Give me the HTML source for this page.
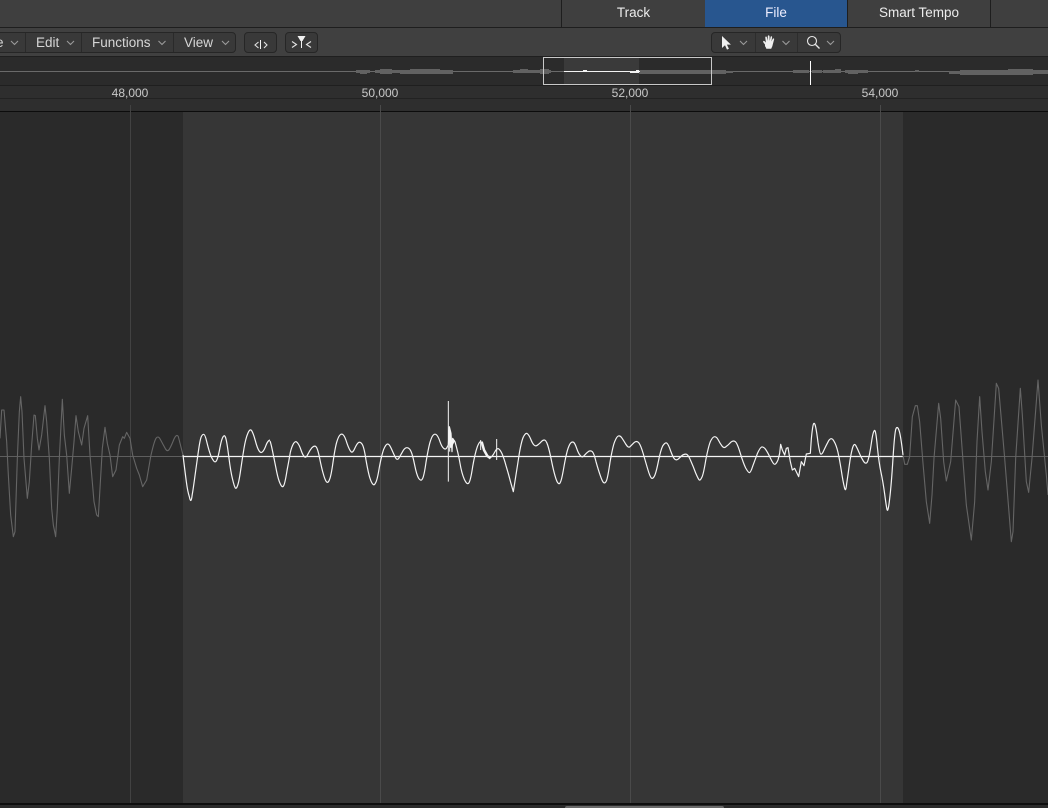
<!DOCTYPE html>
<html><head><meta charset="utf-8">
<style>
html,body{margin:0;padding:0;background:#2a2a2a}
#p{position:relative;width:1048px;height:808px;overflow:hidden;font-family:"Liberation Sans",sans-serif;background:#2a2a2a}
.a{position:absolute}
.t{position:absolute;top:0;height:27px;line-height:25px;text-align:center;color:#ececec;font-size:13.5px;box-sizing:border-box}
.m{position:absolute;top:36px;font-size:13.5px;color:#d6d6d6;line-height:14px;white-space:nowrap}
.r{position:absolute;top:86px;font-size:12px;color:#c8c8c8;line-height:14px;width:60px;text-align:center}
.b{position:absolute;top:32px;height:21px;box-sizing:border-box;border:1px solid #262626;border-radius:4px;background:#393939}
svg{position:absolute;left:0;top:0}
</style></head><body><div id="p">
<div class="a" style="left:0;top:0;width:1048px;height:27px;background:#3f3f3f"></div>
<div class="a" style="left:0;top:27px;width:1048px;height:1px;background:#1e1e1e"></div>
<div class="a" style="left:0;top:28px;width:1048px;height:28px;background:#404040"></div>
<div class="a" style="left:0;top:56px;width:1048px;height:1px;background:#1f1f1f"></div>
<div class="a" style="left:0;top:57px;width:1048px;height:28px;background:#2b2b2b"></div>
<div class="a" style="left:0;top:85px;width:1048px;height:1px;background:#1f1f1f"></div>
<div class="a" style="left:0;top:86px;width:1048px;height:12px;background:#2e2e2e"></div>
<div class="a" style="left:0;top:98px;width:1048px;height:1px;background:#222"></div>
<div class="a" style="left:0;top:99px;width:1048px;height:12px;background:#2e2e2e"></div>
<div class="a" style="left:0;top:111px;width:1048px;height:1px;background:#0c0c0c"></div>

<div class="t" style="left:561px;width:144px;border-left:1px solid #1e1e1e">Track</div>
<div class="t" style="left:705px;width:142px;background:#28568f;color:#eef">File</div>
<div class="t" style="left:847px;width:144px;border-left:1px solid #1e1e1e;border-right:1px solid #1e1e1e">Smart Tempo</div>

<div class="b" style="left:-10px;width:246px"></div>
<div class="a" style="left:25px;top:33px;width:1px;height:19px;background:#2a2a2a"></div>
<div class="a" style="left:81px;top:33px;width:1px;height:19px;background:#2a2a2a"></div>
<div class="a" style="left:173px;top:33px;width:1px;height:19px;background:#2a2a2a"></div>
<div class="m" style="left:-4px">e</div>
<div class="m" style="left:36px">Edit</div>
<div class="m" style="left:92px">Functions</div>
<div class="m" style="left:184px">View</div>
<div class="b" style="left:244px;width:33px"></div>
<div class="b" style="left:285px;width:33px"></div>
<div class="b" style="left:711px;width:130px"></div>
<div class="a" style="left:755px;top:33px;width:1px;height:19px;background:#2d2d2d"></div>
<div class="a" style="left:797px;top:33px;width:1px;height:19px;background:#2d2d2d"></div>

<div class="r" style="left:100px">48,000</div>
<div class="r" style="left:350px">50,000</div>
<div class="r" style="left:600px">52,000</div>
<div class="r" style="left:850px">54,000</div>

<div class="a" style="left:0;top:112px;width:1048px;height:691px;background:#2a2a2a"></div>
<div class="a" style="left:183px;top:112px;width:720px;height:691px;background:#363636"></div>
<div class="a" style="left:564px;top:58px;width:75px;height:26px;background:#3a3a3a"></div>
<div class="a" style="left:0;top:803px;width:1048px;height:2px;background:#0e0e0e"></div>
<div class="a" style="left:0;top:805px;width:1048px;height:3px;background:#2b2b2b"></div>
<div class="a" style="left:565px;top:806px;width:159px;height:2px;background:#6a6a6a;border-radius:2px 2px 0 0"></div>

<svg width="1048" height="808" viewBox="0 0 1048 808" fill="none">
<!-- chevrons -->
<g stroke="#9a9a9a" stroke-width="1.1">
<path d="M11 41l3.500 3.500 3.500-3.500M67 41l3.500 3.500 3.500-3.500M158.500 41l3.500 3.500 3.500-3.500M222 41l3.500 3.500 3.500-3.500M740 41l3.500 3.500 3.500-3.500M782.500 41l3.500 3.500 3.500-3.500M827 41l3.500 3.500 3.500-3.500"/>
</g>
<!-- split / join icons -->
<g stroke="#e2e2e2" stroke-width="1.1">
<path d="M258.500 42l-3.500 3 3.500 3M264 42l3 3-3 3"/>
<path d="M292 41.500l4.500 3-4.500 3M311 41.500l-4.500 3 4.500 3"/>
</g>
<path d="M260.500 40v9M301.500 39v9" stroke="#f2f2f2" stroke-width="1"/>
<path d="M297.500 36h8l-3 5h-2z" fill="#f2f2f2"/>
<!-- pointer -->
<path d="M722 36v12l3-2.700 2 4.300 1.900-.9-2-4.100h4z" fill="#f0f0f0"/>
<!-- hand -->
<path d="M765 44.500c-1-1.300-2.500-3-1.600-3.500 .8-.4 2 1 2.500 1.600l-.6-5c-.1-1.300 1.300-1.400 1.600-.2l.8 3.500.1-4.500c0-1.300 1.600-1.300 1.700 0l.2 4.500.9-3.900c.3-1.200 1.700-.9 1.500.3l-.7 4.200 1.300-2.600c.5-1 1.800-.5 1.400.6l-1.400 5.200c-.4 2.300-1.400 3.300-1.400 4h-5c-.4-1.400-1.300-2.400-1.300-2.400z" fill="#f0f0f0"/>
<!-- magnifier -->
<circle cx="812" cy="41" r="4.500" stroke="#e8e8e8" stroke-width="1.100"/>
<path d="M815.500 44.500l4 4" stroke="#e8e8e8" stroke-width="1.300"/>

<!-- overview -->
<path d="M0 71.500H1048" stroke="#6a6a6a" stroke-width="1"/>
<g fill="#626262">
<rect x="356" y="70" width="14" height="3"/><rect x="360" y="70" width="7" height="4"/><rect x="375" y="70" width="27" height="3"/><rect x="380" y="69" width="12" height="5"/><rect x="400" y="70" width="53" height="4"/><rect x="410" y="69" width="30" height="2"/>
<rect x="513" y="70" width="38" height="3"/><rect x="520" y="69" width="8" height="4"/><rect x="540" y="69" width="9" height="5"/>
<rect x="639" y="70" width="87" height="4"/><rect x="726" y="71" width="7" height="2"/>
<rect x="793" y="70" width="16" height="3"/><rect x="812" y="70" width="10" height="3"/><rect x="823" y="70" width="18" height="3"/><rect x="835" y="69" width="6" height="4"/><rect x="845" y="70" width="20" height="3"/><rect x="848" y="70" width="10" height="4"/><rect x="860" y="70" width="8" height="3"/>
<rect x="915" y="70" width="4" height="2"/><rect x="949" y="71" width="99" height="3"/><rect x="960" y="70" width="48" height="5"/><rect x="1008" y="69" width="25" height="6"/><rect x="1033" y="70" width="15" height="4"/>
</g>
<path d="M564 71.500H640" stroke="#f4f4f4" stroke-width="1"/>
<rect x="583" y="70" width="4" height="2" fill="#f4f4f4"/><rect x="630" y="71" width="9" height="2" fill="#f4f4f4"/><rect x="636" y="70" width="3" height="3" fill="#f4f4f4"/>
<rect x="543.500" y="57.500" width="168" height="27" stroke="#c8c8c8" stroke-width="1"/>
<path d="M810.500 61v24" stroke="#fff" stroke-width="1"/>

<!-- ruler ticks & grid -->
<path d="M130.500 105V803" stroke="#424242" stroke-width="1"/>
<path d="M380.500 105V803M630.500 105V803M880.500 105V803" stroke="#4a4a4a" stroke-width="1"/>

<!-- baseline -->
<path d="M0 456.500H183M903 456.500H1048" stroke="#5e5e5e" stroke-width="1"/>
<path d="M183 456.500H903" stroke="#f6f6f6" stroke-width="1.200"/>

<!-- left -->
<g transform="translate(0,375) scale(.33333)" stroke-linejoin="round">
<path vector-effect="non-scaling-stroke" stroke="#656565" stroke-width="1.100" d="M0 190L5 105 12 105 20 200 25 300 32 420 40 485 45 470 52 250 58 110 62 65 66 110 72 250 82 370 88 320 95 210 102 120 106 122 112 190 117 225 125 180 135 92 140 140 148 250 155 400 160 450 167 485 172 400 178 250 187 73 193 180 200 240 208 355 215 280 222 200 228 122 235 170 245 210 252 160 263 122 270 240 282 380 290 420 295 425 300 340 307 220 315 157 322 205 330 240 338 305 348 285 358 210 368 185 373 190 380 172 390 190 398 240 410 280 418 300 428 335 440 315 452 245 Q462 200 468 190 Q475 180 482 195 Q490 210 496 221 Q503 233 509 221 Q515 210 522 192 Q530 175 535 185 L549 240"/>
<path vector-effect="non-scaling-stroke" stroke="#f4f4f4" stroke-width="1.200" d="M549 240Q555 290 559 320Q563 350 568 365Q573 390 576.500 360Q580 340 585 302Q590 265 595 230Q600 195 603.500 186Q607 178 611 178Q615 178 620 199Q625 220 630 235Q635 250 640.500 257Q646 265 650.500 255Q655 245 660 217Q665 190 670 184Q675 178 678.500 194Q682 210 687 250Q692 290 697.500 312Q703 335 706 339Q709 343 713 331Q717 320 722 285Q727 250 732 220Q737 190 743.500 175Q750 160 755 167Q760 175 766 197Q772 220 777.500 228Q783 236 788 230Q793 225 798 211Q803 197 810 195"/>
</g>
<!-- white middle 1 -->
<g transform="translate(260,390) scale(.33333)" stroke="#f4f4f4" stroke-linejoin="round">
<path vector-effect="non-scaling-stroke" stroke-width="1.200" d="M30 153Q33 160 39 190Q45 220 50 245Q55 270 61 282Q67 295 71 287Q75 280 81 242Q88 205 91 187Q95 170 101 160Q107 151 112 158Q118 165 123 180Q128 195 133 200Q138 205 144 192Q150 180 156 173Q163 166 168 170Q173 175 179 205Q185 235 190 252Q195 270 199 275Q204 281 208 270Q213 260 219 217Q225 175 230 157Q235 140 240 135Q245 130 250 135Q255 140 261 160Q268 180 273 185Q278 190 284 176Q290 162 295 158Q300 154 306 162Q312 170 318 210Q325 250 330 265Q335 280 339 283Q343 287 347 278Q352 270 358 232Q365 195 371 178Q378 162 383 162Q388 162 394 176Q400 190 406 202Q412 214 418 202Q425 190 430 181Q435 173 441 173Q448 173 453 184Q458 195 464 225Q470 255 476 265Q483 275 487 267Q492 260 498 217Q505 175 510 157Q515 140 520 135Q525 130 530 135Q535 140 540 155Q545 170 551 175Q558 180 561 172L565 165 568 110 573 130 576 185 578 145 585 155Q595 190 600 220Q605 250 613 268Q622 287 627 278Q632 270 638 230Q645 190 652 170Q660 150 664 157Q668 165 671 177Q675 190 682 197Q690 205 695 200Q700 195 705 185Q710 175 715 176Q720 178 726 191Q732 205 738 227Q745 250 752 277L760 305 766 267Q772 230 778 190Q785 150 791 139"/>
<path vector-effect="non-scaling-stroke" stroke-width="1" d="M565 33V275M710 147V210M569 115V185M662 150V180"/>
<path vector-effect="non-scaling-stroke" stroke-width="2.500" d="M665 155L672 180 682 198 692 205M568 125L572 170 582 150"/>
</g>
<!-- white middle 2 -->
<g transform="translate(520,400) scale(.33333)" stroke="#f4f4f4" stroke-linejoin="round">
<path vector-effect="non-scaling-stroke" stroke-width="1.200" d="M11 109Q18 97 22 101Q27 105 32 117Q37 130 42 135Q47 140 53 135Q60 130 64 125Q68 120 73 120Q78 120 83 135Q88 150 94 180Q100 210 105 227Q110 245 114 249Q118 254 121 247Q125 240 131 205Q137 170 142 152Q147 135 152 129Q157 124 161 127Q165 130 170 145Q175 160 181 167Q187 175 193 166Q200 158 206 154Q212 151 217 155Q222 160 228 185Q235 210 241 227Q247 245 251 248Q255 251 259 243Q263 235 270 187Q278 140 284 125Q290 110 295 108Q300 106 305 113Q310 120 317 132Q325 145 330 140Q335 135 342 128Q350 121 356 128Q362 135 370 162Q378 190 384 210Q390 230 394 234Q398 238 403 229Q408 220 415 185Q422 150 428 138Q435 127 440 129Q445 132 452 153Q460 175 465 178Q470 182 476 176Q482 170 488 165Q495 161 500 163Q505 165 512 182Q520 200 527 219Q535 238 538 240Q541 242 545 233Q550 225 557 182Q565 140 571 125Q578 110 584 110Q590 110 595 120Q600 130 606 138Q612 146 618 140Q625 135 632 127Q640 120 646 125Q652 130 661 160Q670 190 677 204Q685 218 688 218Q692 218 698 199Q705 180 712 161Q720 143 725 141Q730 140 736 147Q742 155 751 174Q760 193 764 193Q768 193 774 180"/>
</g>
<!-- right -->
<g transform="translate(778,375) scale(.33333)" stroke-linejoin="round">
<path vector-effect="non-scaling-stroke" stroke="#f4f4f4" stroke-width="1.200" d="M0 255L5 235 8 208 13 225 20 240 25 220 30 218 37 260 43 285 50 280 62 305 70 260 78 272 85 237 97 235 100 192Q104 150 107 146Q110 142 113 156Q116 170 120 202Q125 235 128 237Q132 240 138 225Q145 210 152 197Q160 185 167 197Q175 210 180 232Q185 255 190 287Q195 320 199 336Q203 356 206 326Q210 300 214 270Q218 240 223 221Q228 203 233 211Q238 220 243 232Q248 245 256 258Q265 272 270 256Q275 240 280 205Q285 170 289 167Q293 160 298 215Q303 265 309 292Q315 320 320 357Q325 395 327 403Q330 416 335 371Q340 330 345 250Q350 170 354 161Q358 152 363 166Q368 180 375 240"/>
<path vector-effect="non-scaling-stroke" stroke="#656565" stroke-width="1.100" d="M375 240L380 268 388 268 395 245 403 125 412 92 418 92 425 140 435 265 445 380 455 445 462 360 468 250 482 85 488 130 497 260 505 318 518 260 533 75 543 95 553 230 565 390 580 495 590 380 597 200 605 65 612 170 622 290 630 345 640 260 655 25 662 40 680 250 700 500 705 470 713 250 727 40 733 120 745 320 752 352 762 250 780 15 790 150 805 300 810 360"/>
</g>
</svg>
</div></body></html>
